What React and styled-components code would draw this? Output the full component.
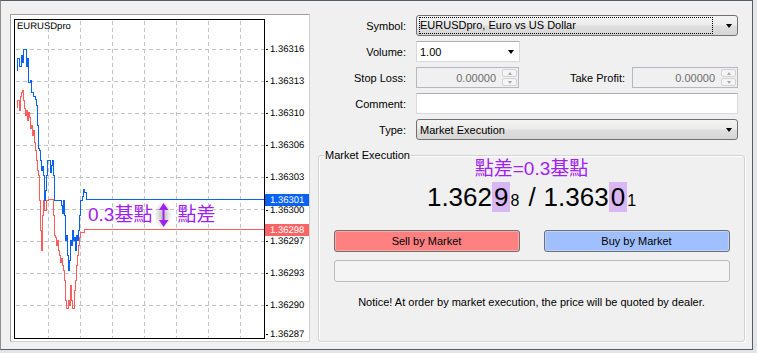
import React from 'react';
import styled, { createGlobalStyle } from 'styled-components';

const GlobalStyle = createGlobalStyle`
  html, body {
    margin: 0;
    padding: 0;
    background: #e4e4e4;
  }
  body {
    font-family: "Liberation Sans", Arial, sans-serif;
    font-size: 11px;
    color: #000;
  }
`;

// chart coordinates are page pixels, shifted into the frame's inner box
const X0 = 11;
const Y0 = 15;
const sx = (x) => x - X0 + 0.5;
const sy = (y) => y - Y0 + 0.5;

const gridX = [48, 80, 112, 144, 176, 208, 240];
const gridY = [49, 81, 113, 145, 177, 209, 241, 273, 305];
const axis = [
  ['1.36316', 49],
  ['1.36313', 81],
  ['1.36310', 113],
  ['1.36306', 145],
  ['1.36303', 177],
  ['1.36300', 210],
  ['1.36297', 241],
  ['1.36293', 273],
  ['1.36290', 305],
  ['1.36287', 334],
];

const askTicks = [
  [16, 70], [17, 58], [19, 66], [21, 55], [22, 62], [23, 49], [25, 49], [26, 66],
  [27, 58], [28, 82], [30, 80], [31, 92], [33, 96], [35, 99], [36, 105], [37, 125],
  [38, 148], [39, 150], [40, 160], [41, 170], [42, 166], [43, 175], [44, 200],
  [45, 190], [46, 175], [47, 160], [49, 160], [50, 172], [51, 165], [52, 160],
  [53, 175], [54, 200], [58, 200], [60, 200], [61, 205], [62, 213], [63, 200],
  [64, 215], [65, 240], [66, 235], [67, 255], [68, 270], [69, 260], [70, 240],
  [71, 245], [72, 230], [73, 240], [74, 237], [75, 250], [76, 235], [77, 240],
  [78, 230], [79, 215], [80, 200], [82, 196], [83, 189], [84, 192], [86, 199],
  [264, 199],
];

const bidTicks = [
  [16, 107], [17, 100], [19, 110], [20, 96], [21, 92], [22, 90], [23, 100],
  [24, 108], [25, 115], [26, 110], [27, 120], [28, 112], [29, 117], [30, 128],
  [31, 125], [32, 135], [33, 130], [34, 142], [35, 150], [36, 160], [37, 170],
  [38, 175], [39, 200], [40, 230], [41, 250], [42, 215], [43, 200], [44, 210],
  [46, 200], [48, 199], [52, 199], [53, 215], [54, 235], [55, 237], [56, 245],
  [57, 240], [58, 250], [59, 255], [60, 262], [61, 258], [62, 265], [63, 270],
  [64, 280], [65, 300], [66, 308], [67, 308], [68, 300], [69, 305], [70, 285],
  [71, 300], [72, 308], [73, 308], [74, 290], [75, 280], [76, 265], [77, 255],
  [78, 245], [79, 237], [80, 232], [82, 232], [84, 229], [86, 229], [264, 229],
];

const stepPath = (pts) =>
  pts
    .map(([x, y], i) => (i === 0 ? `M${sx(x)} ${sy(y)}` : `H${sx(x)} V${sy(y)}`))
    .join(' ');

function PriceChart() {
  return (
    <ChartSvg width="298" height="326" viewBox="0 0 298 326">
      {gridX.map((x) => (
        <line key={`gx${x}`} x1={sx(x)} x2={sx(x)} y1={sy(20)} y2={sy(337)} className="grid" />
      ))}
      {gridY.map((y) => (
        <line key={`gy${y}`} x1={sx(15)} x2={sx(263)} y1={sy(y)} y2={sy(y)} className="grid" />
      ))}
      <path d={stepPath(bidTicks)} stroke="#ff5c5c" />
      <path d={stepPath(askTicks)} stroke="#0a62f5" />
      <rect x={sx(14)} y={sy(19)} width="250" height="319" className="frame" />
      {axis.map(([label, y]) => (
        <g key={label}>
          <line x1={sx(265)} x2={sx(267)} y1={sy(y)} y2={sy(y)} className="tick" />
          <text x={270 - X0} y={y - Y0 + 0.5}>{label}</text>
        </g>
      ))}
      <rect x={265 - X0} y={194 - Y0} width="44" height="12" fill="#0a62f5" />
      <text x={270 - X0} y={200 - Y0} className="tag">1.36301</text>
      <rect x={265 - X0} y={224 - Y0} width="44" height="12" fill="#fb6464" />
      <text x={270 - X0} y={230 - Y0} className="tag">1.36298</text>
      <text x={17 - X0} y={26 - Y0} className="symbol">EURUSDpro</text>
    </ChartSvg>
  );
}

function UpDownArrow() {
  return (
    <svg width="11" height="24" viewBox="0 0 11 24">
      <path d="M5.5 0 L10.5 7 L1 7 Z M5.5 24 L10.5 17 L1 17 Z" fill="#a020f0" />
      <rect x="4.5" y="6" width="2" height="12" fill="#a020f0" />
    </svg>
  );
}

function OrderForm() {
  return (
    <Form>
      <Row>
        <Label>Symbol:</Label>
        <Combo $w={322}>
          <Focus>EURUSDpro, Euro vs US Dollar</Focus>
          <Caret />
        </Combo>
      </Row>
      <Row>
        <Label>Volume:</Label>
        <Combo $w={104} $flat>
          <ComboText>1.00</ComboText>
          <Caret />
        </Combo>
      </Row>
      <Row>
        <Label>Stop Loss:</Label>
        <SpinBox $w={103}>
          <SpinValue>0.00000</SpinValue>
          <Spinner>
            <SpinHalf><SpinArrow $up /></SpinHalf>
            <SpinHalf><SpinArrow /></SpinHalf>
          </Spinner>
        </SpinBox>
        <Label $w={106} $gap={7}>Take Profit:</Label>
        <SpinBox $w={106}>
          <SpinValue>0.00000</SpinValue>
          <Spinner>
            <SpinHalf><SpinArrow $up /></SpinHalf>
            <SpinHalf><SpinArrow /></SpinHalf>
          </Spinner>
        </SpinBox>
      </Row>
      <Row>
        <Label>Comment:</Label>
        <TextField $w={322} />
      </Row>
      <Row>
        <Label>Type:</Label>
        <Combo $w={322}>
          <ComboText>Market Execution</ComboText>
          <Caret />
        </Combo>
      </Row>
    </Form>
  );
}

function MarketGroup() {
  return (
    <Group>
      <Legend>Market Execution</Legend>
      <SpreadNote>點差=0.3基點</SpreadNote>
      <Quote>
        1.362<Pip>9</Pip><Point>8</Point>
        <Sep>/</Sep>
        1.363<Pip>0</Pip><Point>1</Point>
      </Quote>
      <ButtonRow>
        <MarketButton type="button" $tone="sell">Sell by Market</MarketButton>
        <MarketButton type="button" $tone="buy">Buy by Market</MarketButton>
      </ButtonRow>
      <Progress />
      <Notice>Notice! At order by market execution, the price will be quoted by dealer.</Notice>
    </Group>
  );
}

export default function App() {
  return (
    <>
      <GlobalStyle />
      <Dialog>
        <ChartFrame>
          <PriceChart />
          <Annotation>
            <span>0.3基點</span>
            <ArrowGlow>
              <UpDownArrow />
            </ArrowGlow>
            <span>點差</span>
          </Annotation>
        </ChartFrame>
        <Panel>
          <OrderForm />
          <MarketGroup />
        </Panel>
      </Dialog>
    </>
  );
}

const Dialog = styled.div`
  box-sizing: border-box;
  width: 753px;
  height: 350px;
  display: flex;
  background: #f0f0f0;
  border: 1px solid #575d64;
  border-left-color: #8e8e8e;
`;

const ChartFrame = styled.div`
  position: relative;
  box-sizing: border-box;
  width: 300px;
  height: 328px;
  margin: 13px 0 0 9px;
  background: #fff;
  border: 1px solid;
  border-color: #a0a0a0 #d0d0d0 #d0d0d0 #a0a0a0;
`;

const ChartSvg = styled.svg`
  display: block;
  shape-rendering: crispEdges;

  path {
    fill: none;
    stroke-width: 1;
  }
  .grid {
    stroke: #c4c4c4;
    stroke-dasharray: 4 3;
  }
  .frame {
    fill: none;
    stroke: #000;
  }
  .tick {
    stroke: #000;
  }
  text {
    font-family: "Liberation Sans", Arial, sans-serif;
    font-size: 9.5px;
    fill: #000;
    dominant-baseline: central;
    text-rendering: geometricPrecision;
  }
  .tag {
    fill: #fff;
  }
  .symbol {
    font-size: 9.5px;
  }
`;

const Annotation = styled.div`
  position: absolute;
  left: 77px;
  top: 186px;
  display: flex;
  align-items: center;
  font-family: "Liberation Sans", "Noto Sans CJK TC", sans-serif;
  font-size: 19px;
  line-height: 22px;
  color: #a020f0;
  white-space: nowrap;
  text-shadow: 0 0 2px #fff;
`;

const ArrowGlow = styled.span`
  display: flex;
  align-items: center;
  justify-content: center;
  width: 18px;
  height: 28px;
  margin: 0 5px 0 2px;
  background: radial-gradient(ellipse at center, rgba(0, 0, 0, 0.2) 20%, rgba(0, 0, 0, 0) 70%);
`;

const Panel = styled.div`
  flex: 1;
  display: flex;
  flex-direction: column;
  padding-top: 14px;
`;

const Form = styled.div`
  display: flex;
  flex-direction: column;
  gap: 5px;
`;

const Row = styled.div`
  display: flex;
  align-items: center;
  height: 21px;
`;

const Label = styled.span`
  width: ${(p) => p.$w || 96}px;
  margin-right: ${(p) => p.$gap || 10}px;
  text-align: right;
  white-space: nowrap;
`;

const Combo = styled.div`
  box-sizing: border-box;
  width: ${(p) => p.$w}px;
  height: 21px;
  display: flex;
  align-items: center;
  padding: 0 4px 0 2px;
  border: 1px solid ${(p) => (p.$flat ? '#d6d9de' : '#707070')};
  border-top-color: ${(p) => (p.$flat ? '#abadb3' : '#707070')};
  border-radius: ${(p) => (p.$flat ? 0 : 3)}px;
  background: ${(p) =>
    p.$flat ? '#fff' : 'linear-gradient(#f3f3f3 0%, #ececec 45%, #dedede 55%, #d6d6d6 100%)'};
`;

const ComboText = styled.span`
  padding-left: 1px;
  white-space: nowrap;
`;

const Focus = styled.span`
  box-sizing: border-box;
  flex: 1;
  height: 17px;
  line-height: 15px;
  margin-right: 13px;
  padding-left: 0;
  border: 1px dotted #000;
  white-space: nowrap;
`;

const Caret = styled.span`
  width: 0;
  height: 0;
  margin-left: auto;
  margin-right: 1px;
  border-left: 3.5px solid transparent;
  border-right: 3.5px solid transparent;
  border-top: 4px solid #000;
`;

const SpinBox = styled.div`
  box-sizing: border-box;
  width: ${(p) => p.$w}px;
  height: 21px;
  display: flex;
  align-items: center;
  padding: 1px;
  border: 1px solid #b5b8bc;
  background: #f0f0f0;
`;

const SpinValue = styled.span`
  flex: 1;
  text-align: right;
  padding-right: 6px;
  color: #6d6d6d;
`;

const Spinner = styled.div`
  display: flex;
  flex-direction: column;
  width: 15px;
  height: 17px;
  gap: 1px;
`;

const SpinHalf = styled.div`
  box-sizing: border-box;
  flex: 1;
  display: flex;
  align-items: center;
  justify-content: center;
  border: 1px solid #d2d2d2;
  border-radius: 2px;
  background: #f4f4f4;
`;

const SpinArrow = styled.span`
  width: 0;
  height: 0;
  border-left: 2.5px solid transparent;
  border-right: 2.5px solid transparent;
  ${(p) => (p.$up ? 'border-bottom: 3px solid #a8a8a8;' : 'border-top: 3px solid #a8a8a8;')}
`;

const TextField = styled.div`
  box-sizing: border-box;
  width: ${(p) => p.$w}px;
  height: 21px;
  border: 1px solid #d6d9de;
  border-top-color: #abadb3;
  background: #fff;
`;

const Group = styled.div`
  position: relative;
  box-sizing: border-box;
  width: 427px;
  height: 187px;
  margin: 15px 0 0 8px;
  display: flex;
  flex-direction: column;
  align-items: center;
  border: 1px solid #d3d3d3;
  border-radius: 3px;
  box-shadow: inset 1px 1px 0 #fff, 1px 1px 0 #fff;
`;

const Legend = styled.span`
  position: absolute;
  top: -8px;
  left: 5px;
  padding: 0 1px;
  line-height: 14px;
  background: #f0f0f0;
`;

const SpreadNote = styled.div`
  margin-top: 2px;
  font-family: "Liberation Sans", "Noto Sans CJK TC", sans-serif;
  font-size: 19px;
  line-height: 22px;
  color: #a020f0;
`;

const Quote = styled.div`
  height: 30px;
  margin-top: 2px;
  font-size: 26px;
  line-height: 30px;
  white-space: nowrap;
`;

const Pip = styled.span`
  padding: 0 2px;
  background: #d9b6f4;
`;

const Point = styled.span`
  font-size: 16px;
  line-height: 1;
`;

const Sep = styled.span`
  padding: 0 8px 0 9px;
`;

const ButtonRow = styled.div`
  display: flex;
  gap: 24px;
  margin-top: 18px;
`;

const MarketButton = styled.button`
  box-sizing: border-box;
  width: 186px;
  height: 22px;
  padding: 0;
  border: 1px solid #6f6f6f;
  border-radius: 3px;
  background: ${(p) => (p.$tone === 'sell' ? '#ff8080' : '#9fbfff')};
  box-shadow: inset 0 0 0 1px rgba(255, 255, 255, 0.3);
  font-family: "Liberation Sans", Arial, sans-serif;
  font-size: 11px;
  color: #000;
`;

const Progress = styled.div`
  box-sizing: border-box;
  width: 396px;
  height: 22px;
  margin-top: 8px;
  border: 1px solid #bcbcbc;
  border-radius: 3px;
  background: #f4f4f4;
`;

const Notice = styled.div`
  margin-top: 13px;
  line-height: 14px;
  white-space: nowrap;
`;
